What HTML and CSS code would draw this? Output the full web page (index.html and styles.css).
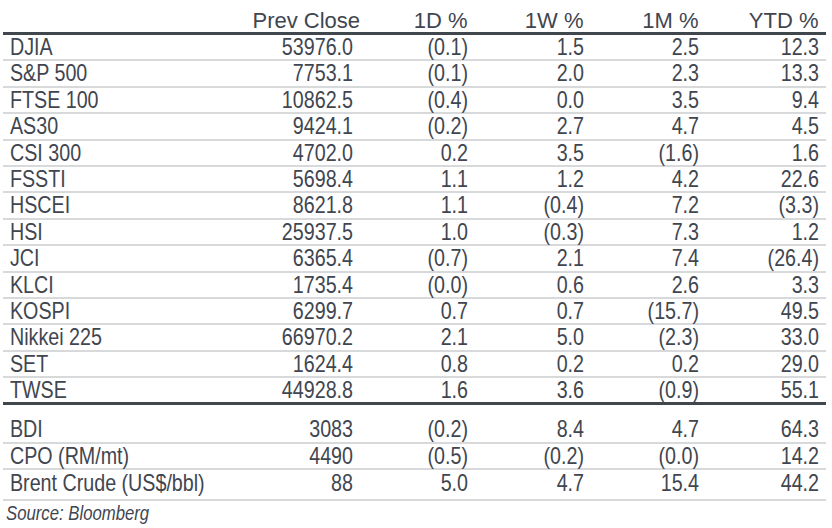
FILE: index.html
```html
<!DOCTYPE html>
<html lang="en">
<head>
<meta charset="utf-8">
<title>Market indices</title>
<link rel="stylesheet" href="styles.css">
</head>
<body>
<div class="table">
  <div class="row head">
    <span></span><span>Prev Close</span><span>1D %</span><span>1W %</span><span>1M %</span><span>YTD %</span>
  </div>
  <div class="block">
    <div class="row"><span>DJIA</span><span>53976.0</span><span>(0.1)</span><span>1.5</span><span>2.5</span><span>12.3</span></div>
    <div class="row"><span>S&amp;P 500</span><span>7753.1</span><span>(0.1)</span><span>2.0</span><span>2.3</span><span>13.3</span></div>
    <div class="row"><span>FTSE 100</span><span>10862.5</span><span>(0.4)</span><span>0.0</span><span>3.5</span><span>9.4</span></div>
    <div class="row"><span>AS30</span><span>9424.1</span><span>(0.2)</span><span>2.7</span><span>4.7</span><span>4.5</span></div>
    <div class="row"><span>CSI 300</span><span>4702.0</span><span>0.2</span><span>3.5</span><span>(1.6)</span><span>1.6</span></div>
    <div class="row"><span>FSSTI</span><span>5698.4</span><span>1.1</span><span>1.2</span><span>4.2</span><span>22.6</span></div>
    <div class="row"><span>HSCEI</span><span>8621.8</span><span>1.1</span><span>(0.4)</span><span>7.2</span><span>(3.3)</span></div>
    <div class="row"><span>HSI</span><span>25937.5</span><span>1.0</span><span>(0.3)</span><span>7.3</span><span>1.2</span></div>
    <div class="row"><span>JCI</span><span>6365.4</span><span>(0.7)</span><span>2.1</span><span>7.4</span><span>(26.4)</span></div>
    <div class="row"><span>KLCI</span><span>1735.4</span><span>(0.0)</span><span>0.6</span><span>2.6</span><span>3.3</span></div>
    <div class="row"><span>KOSPI</span><span>6299.7</span><span>0.7</span><span>0.7</span><span>(15.7)</span><span>49.5</span></div>
    <div class="row"><span>Nikkei 225</span><span>66970.2</span><span>2.1</span><span>5.0</span><span>(2.3)</span><span>33.0</span></div>
    <div class="row"><span>SET</span><span>1624.4</span><span>0.8</span><span>0.2</span><span>0.2</span><span>29.0</span></div>
    <div class="row last"><span>TWSE</span><span>44928.8</span><span>1.6</span><span>3.6</span><span>(0.9)</span><span>55.1</span></div>
  </div>
  <div class="block second">
    <div class="row"><span>BDI</span><span>3083</span><span>(0.2)</span><span>8.4</span><span>4.7</span><span>64.3</span></div>
    <div class="row"><span>CPO (RM/mt)</span><span>4490</span><span>(0.5)</span><span>(0.2)</span><span>(0.0)</span><span>14.2</span></div>
    <div class="row tall"><span>Brent Crude (US$/bbl)</span><span>88</span><span>5.0</span><span>4.7</span><span>15.4</span><span>44.2</span></div>
  </div>
  <p class="source"><span>Source: Bloomberg</span></p>
</div>
</body>
</html>
```
FILE: styles.css
```css
html, body {
  margin: 0;
  padding: 0;
  background: #ffffff;
}

.table {
  margin-left: 3px;
  width: 823px;
  color: #3f4650;
  font-family: "Liberation Sans", Arial, sans-serif;
  font-size: 24px;
}

.row {
  display: grid;
  grid-template-columns: 249.5px 100px 115px 116px 115px 120px;
  padding-right: 7.5px;
  height: 24.4px;
  line-height: 24.4px;
  border-bottom: 2px solid #d7d9da;
  white-space: nowrap;
}

.row span {
  text-align: right;
  transform: scaleX(0.82);
  transform-origin: right center;
}

.row span:first-child {
  text-align: left;
  padding-left: 8.5px;
  transform-origin: left center;
}

.row.head {
  height: 32px;
  line-height: 22px;
  align-items: end;
  font-size: 22px;
  border-bottom: 3px solid #40474d;
}

.row.head span {
  transform: none;
}

.row.last {
  border-bottom: 3px solid #40474d;
}

.block.second {
  margin-top: 12px;
}

.row.tall {
  padding-top: 1px;
  height: 27.4px;
}

.source {
  margin: 0;
  padding-left: 3px;
  font-style: italic;
  font-size: 20.4px;
  line-height: 24px;
}

.source span {
  display: inline-block;
  transform: scaleX(0.82);
  transform-origin: left center;
}
```
